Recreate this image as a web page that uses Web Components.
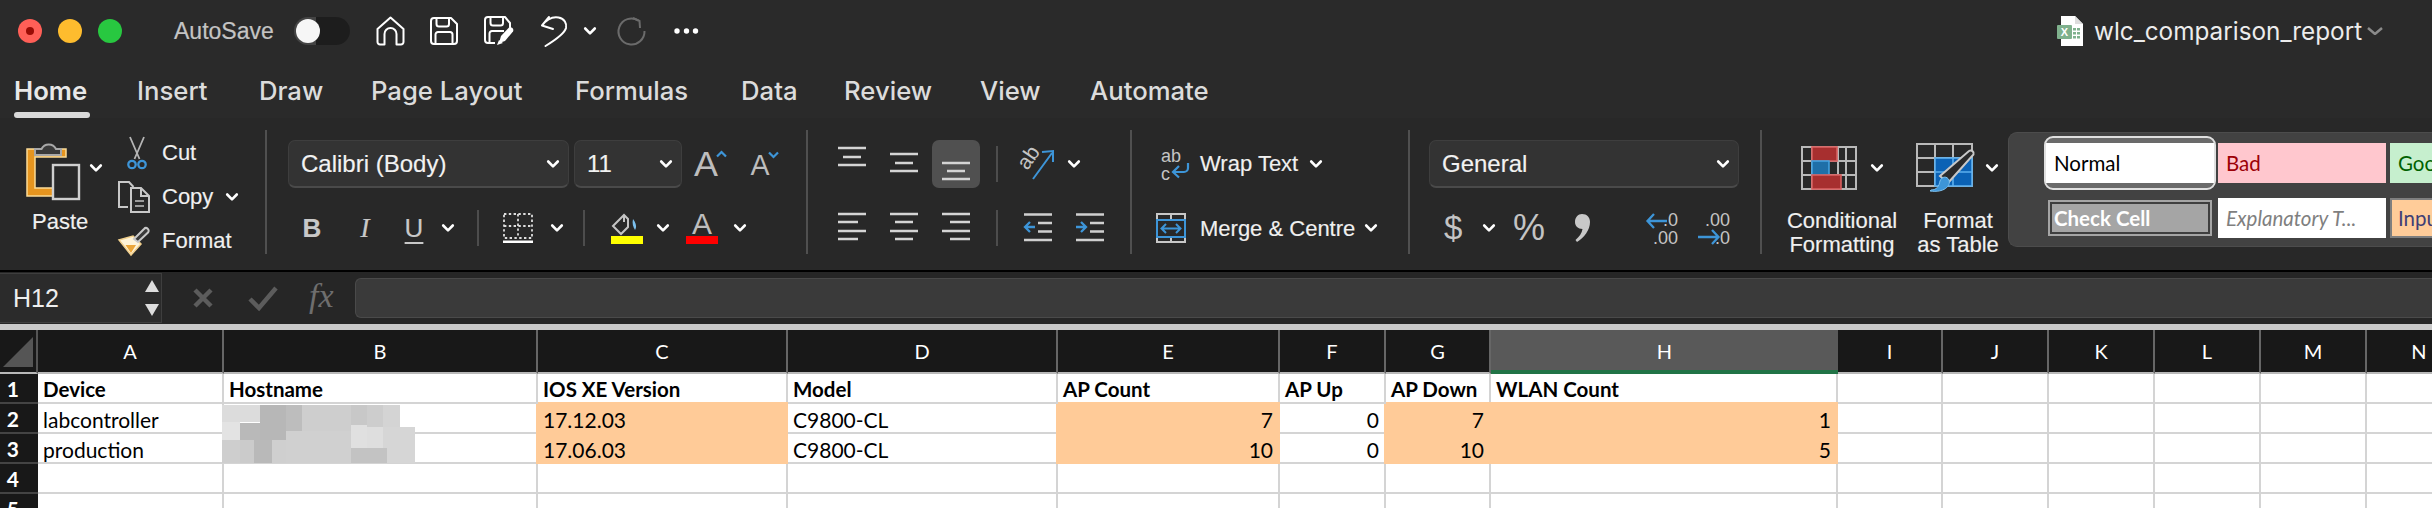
<!DOCTYPE html>
<html><head><meta charset="utf-8"><title>wlc_comparison_report</title>
<style>
html,body{margin:0;padding:0;background:#2a2a2a;width:2432px;height:508px;overflow:hidden;font-family:"Liberation Sans",sans-serif}
xl-app{display:block;width:2432px;height:508px;overflow:hidden}
</style></head><body>
<xl-app></xl-app>
<script>
const ICONS={
chev:[12,8,'<path d="M1.2 1.5 6 6.3 10.8 1.5" fill="none" stroke="#fff" stroke-width="2.6" stroke-linecap="round" stroke-linejoin="round"/>'],
home:[30,30,'<path d="M1.5 13 14.5 1.5 27.5 13V26a2.5 2.5 0 0 1-2.500 2.500H20.500V18a6 6 0 0 0-12 0V28.500H4a2.500 2.500 0 0 1-2.500-2.500Z" fill="none" stroke="#fff" stroke-width="2" stroke-linejoin="round"/>'],
save:[28,28,'<g fill="none" stroke="#fff" stroke-width="2" stroke-linejoin="round"><path d="M4 1H21L27 7V24a3 3 0 0 1-3 3H4a3 3 0 0 1-3-3V4a3 3 0 0 1 3-3Z"/><path d="M6.500 1V7a2.500 2.500 0 0 0 2.500 2.500H16.500A2.500 2.500 0 0 0 19 7V1"/><path d="M5.500 27V17.500A2.500 2.500 0 0 1 8 15H20a2.500 2.500 0 0 1 2.500 2.500V27"/></g>'],
saveas:[30,30,'<g fill="none" stroke="#fff" stroke-width="2" stroke-linejoin="round"><path d="M26 12V7L21 1H4a3 3 0 0 0-3 3V24a3 3 0 0 0 3 3H11"/><path d="M6.500 1V7a2.500 2.500 0 0 0 2.500 2.500H16.500A2.500 2.500 0 0 0 19 7V1"/><path d="M5.500 27V17.500A2.500 2.500 0 0 1 8 15H20"/></g><path d="M15 27 17 20 25 11.500a3 3 0 0 1 4 4L21 25Z" fill="#fff"/><path d="M13 29 15 24 19 27Z" fill="#fff"/>'],
undo:[28,32,'<path d="M9 2 2 10.500 13 14M2 10.500C7 4 13 1.500 18.500 2.500 24.500 3.500 27 8.500 26 13 25 17 21 21.500 5.500 31" fill="none" stroke="#fff" stroke-width="2" stroke-linejoin="round" stroke-linecap="round"/>'],
redo:[28,28,'<path d="M20.500 3.500A13 13 0 1 0 26.500 14" fill="none" stroke="#6b6b6b" stroke-width="2"/><path d="M15 1 21.500 4 22 11" fill="none" stroke="#6b6b6b" stroke-width="2"/>'],
dots:[24,6,'<g fill="#fff"><circle cx="3" cy="3" r="2.700"/><circle cx="12.500" cy="3" r="2.700"/><circle cx="21.500" cy="3" r="2.700"/></g>'],
xls:[26,30,'<path d="M4 0H18L26 8V30H4Z" fill="#fff"/><path d="M18 0 26 8H18Z" fill="#ddd"/><rect x="0" y="9" width="15" height="14" rx="1" fill="#7fb18d"/><text x="7.500" y="20" font-family="Liberation Sans" font-size="11" font-weight="700" fill="#fff" text-anchor="middle">X</text><g fill="#7fb18d"><rect x="16" y="12" width="3" height="2.500"/><rect x="20" y="12" width="3" height="2.500"/><rect x="16" y="16" width="3" height="2.500"/><rect x="20" y="16" width="3" height="2.500"/><rect x="16" y="20" width="3" height="2.500"/><rect x="20" y="20" width="3" height="2.500"/></g>'],
paste:[54,60,'<path d="M1 9H40V17H9V48H27V56H1Z" fill="#e6951f" stroke="#fbdc98" stroke-width="1.500"/><path d="M9 15V9H15.500A8 8 0 0 1 30 9H35V15Z" fill="#3a3a3a" stroke="#a8a8a8" stroke-width="2"/><rect x="27" y="25" width="26" height="34" fill="#282828" stroke="#cfcfcf" stroke-width="2.400"/>'],
cut:[20,32,'<path d="M3 0 12.500 22M17 0 7.500 22" stroke="#b5b5b5" stroke-width="1.800" fill="none"/><circle cx="5" cy="27.500" r="3.700" fill="none" stroke="#3d95d8" stroke-width="2.300"/><circle cx="15" cy="27.500" r="3.700" fill="none" stroke="#3d95d8" stroke-width="2.300"/>'],
copy:[32,32,'<g fill="none" stroke="#c8c8c8" stroke-width="2"><path d="M10 26H1V1H11L15.500 6"/><path d="M13 7H23L31 15V31H13Z"/><path d="M23 7V15H31"/></g><path d="M17 20H26M17 25H26" stroke="#9a9a9a" stroke-width="2.200"/>'],
brush:[32,30,'<path d="M15 10 23 18 13 29 1 14Z" fill="#fff4d8" stroke="#f1d08d" stroke-width="1.500"/><path d="M7.500 19 18 19 13 27Z" fill="#eba63a"/><path d="M16 13 26 3a2.500 2.500 0 0 1 4 3.500L20 16Z" fill="#3a3a3a" stroke="#c8c8c8" stroke-width="2"/>'],
aup:[32,28,'<text x="11" y="26" font-family="Liberation Sans" font-size="35" fill="#bdbdbd" text-anchor="middle" font-weight="400" textLength="24" lengthAdjust="spacingAndGlyphs">A</text><path d="M22 6.500 26.500 2 31 6.500" fill="none" stroke="#3d95d8" stroke-width="2.200"/>'],
adown:[28,26,'<text x="9" y="24" font-family="Liberation Sans" font-size="29" fill="#bdbdbd" text-anchor="middle" textLength="19" lengthAdjust="spacingAndGlyphs">A</text><path d="M18 1.500 22.500 6 27 1.500" fill="none" stroke="#3d95d8" stroke-width="2.200"/>'],
border:[30,30,'<rect x="1" y="1" width="28" height="24" fill="none" stroke="#ddd" stroke-width="1.800" stroke-dasharray="2.400 2.400"/><path d="M15 1V25M1 13H29" fill="none" stroke="#ddd" stroke-width="1.800" stroke-dasharray="2.400 2.400"/><rect y="27.500" width="30" height="2.500" fill="#fff"/>'],
fill:[32,32,'<path d="M2 14 13 3 17 7 17 15 10 22Z" fill="none" stroke="#c4c4c4" stroke-width="2"/><path d="M13 3V10" stroke="#c4c4c4" stroke-width="2"/><path d="M22 7C25 11 26 15 24 18 22 15 21 11 22 7Z" fill="#7cc0ee"/><rect y="24" width="32" height="8" fill="#ffff00"/>'],
fcolor:[32,32,'<text x="16" y="22" font-family="Liberation Sans" font-size="30" fill="#bdbdbd" text-anchor="middle" textLength="20" lengthAdjust="spacingAndGlyphs">A</text><rect y="24" width="32" height="8" fill="#ff0000"/>'],
orient:[33,31,'<text x="-1" y="16" transform="rotate(-55 8 13)" font-family="Liberation Sans" font-size="21" fill="#c4c4c4">ab</text><path d="M11 30 30 4M20 3 31 2 31 13" fill="none" stroke="#3d95d8" stroke-width="2"/>'],
outdent:[28,38,'<path d="M0 1.500H28M14 10H28M14 18.500H28M0 27H28" transform="translate(0,4)" stroke="#cfcfcf" stroke-width="2.500"/><path d="M11 14.500H1M6 9.500 1 14.500 6 19.500" transform="translate(0,3.500)" fill="none" stroke="#3d95d8" stroke-width="2.300"/>'],
indent:[28,38,'<path d="M0 1.500H28M14 10H28M14 18.500H28M0 27H28" transform="translate(0,4)" stroke="#cfcfcf" stroke-width="2.500"/><path d="M0 14.500H10M5 9.500 10 14.500 5 19.500" transform="translate(0,3.500)" fill="none" stroke="#3d95d8" stroke-width="2.300"/>'],
wrap:[28,28,'<text x="0" y="12" font-family="Liberation Sans" font-size="18" fill="#c4c4c4">ab</text><text x="0" y="30" font-family="Liberation Sans" font-size="18" fill="#c4c4c4">c</text><path d="M27 13V18a4 4 0 0 1-4 4H13M18 16 12 22 18 27.500" fill="none" stroke="#3d95d8" stroke-width="2.200"/>'],
merge:[30,30,'<path d="M15 0V7M15 24V30M0 1H30M0 29H30M1 0V30M29 0V30" fill="none" stroke="#c8c8c8" stroke-width="2"/><rect x="1" y="7" width="28" height="17" fill="#282828" stroke="#3d95d8" stroke-width="2"/><path d="M6 15.500H24M10 11 5.500 15.500 10 20M20 11 24.500 15.500 20 20" fill="none" stroke="#3d95d8" stroke-width="2"/>'],
comma:[15,28,'<path d="M7 0C12 0 15 3.500 15 8 15 16 9 24 2 28L0.500 26C4 23 7 19 7.500 15 3 15 0 12 0 8 0 3.500 3 0 7 0Z" fill="#c8c8c8"/>'],
incd:[32,36,'<text x="32" y="16" text-anchor="end" font-family="Liberation Sans" font-size="18" fill="#c4c4c4">.0</text><text x="32" y="34" text-anchor="end" font-family="Liberation Sans" font-size="18" fill="#c4c4c4">.00</text><path d="M21 11H2M8 4 1.500 11 8 18" fill="none" stroke="#3d95d8" stroke-width="2.300"/>'],
decd:[32,36,'<text x="32" y="16" text-anchor="end" font-family="Liberation Sans" font-size="18" fill="#c4c4c4">.00</text><text x="32" y="34" text-anchor="end" font-family="Liberation Sans" font-size="18" fill="#c4c4c4">.0</text><path d="M0 27H20M14 20 20.500 27 14 34" fill="none" stroke="#3d95d8" stroke-width="2.300"/>'],
cond:[56,44,'<path d="M1 1H55V43H1ZM1 15H55M1 29H55M11 1V43M27 1V43M37 1V43M45 1V43" fill="none" stroke="#b9b9b9" stroke-width="2"/><rect x="11" y="1" width="25" height="14" fill="#a72f2f" stroke="#d9605f" stroke-width="1.600"/><rect x="11" y="15" width="17" height="14" fill="#1f6fa8" stroke="#43a2e0" stroke-width="1.600"/><rect x="11" y="29" width="29" height="14" fill="#a72f2f" stroke="#d9605f" stroke-width="1.600"/>'],
table:[60,50,'<path d="M1 1H56V43H1ZM1 15H56M1 29H56M19 1V43M37 1V43" fill="none" stroke="#b9b9b9" stroke-width="2"/><rect x="19" y="15" width="37" height="28" fill="#0b62b5" stroke="#5cb0ee" stroke-width="1.600"/><path d="M19 29H56M37 15V43" stroke="#5cb0ee" stroke-width="1.600"/><path d="M24 33 53 8a3 3 0 0 1 4.500 3.500L32 40Z" fill="#2a2a2a" stroke="#c8c8c8" stroke-width="2"/><path d="M15 47C21 47 23 43 24 38 26 33 31 33 33 37 35 43 28 50 14 48Z" fill="#3d95d8" stroke="#7cc0ee" stroke-width="1"/>'],
fx:[30,30,'<text x="0" y="24" font-family="Liberation Serif" font-style="italic" font-size="34" fill="#6e6e6e">fx</text>'],
x:[20,18,'<path d="M2 1 18 17M18 1 2 17" stroke="#5c5c5c" stroke-width="4.500"/>'],
check:[30,24,'<path d="M2 13 11 22 28 2" fill="none" stroke="#5c5c5c" stroke-width="4.500"/>']
};
function lines(rows,w){return `<svg width="48" height="48" viewBox="0 0 48 48"><path d="${rows.map(r=>`M${r[1]} ${r[0]}H${r[2]}`).join('')}" stroke="#d4d4d4" stroke-width="2.500"/></svg>`}
const def=(name,html,extra)=>{customElements.define(name,class extends HTMLElement{
  constructor(){super();const s=this.attachShadow({mode:'open'});s.innerHTML=typeof html==='function'?html(this):html;}
  connectedCallback(){if(extra)extra(this)}
})};
customElements.define('xl-icon',class extends HTMLElement{
  connectedCallback(){
    if(this.shadowRoot)return;
    const [w,h,d]=ICONS[this.getAttribute('name')];
    const s=this.attachShadow({mode:'open'});
    s.innerHTML=`<style>:host{display:inline-flex;flex:none;width:${w}px;height:${h}px}svg{display:block;overflow:visible}</style><svg width="${w}" height="${h}" viewBox="0 0 ${w} ${h}">${d}</svg>`;
  }
});
def('xl-select',`<style>
:host{display:flex;align-items:center;box-sizing:border-box;height:48px;background:#333;border:1px solid #3e3e3e;border-bottom:2px solid #4a4a4a;border-radius:7px;padding:0 9px 0 12px;color:#f2f2f2;font:24px "Liberation Sans",sans-serif;flex:none}
.v{flex:1;white-space:nowrap}</style><span class="v"><slot></slot></span><xl-icon name="chev"></xl-icon>`);
def('xl-title',`<style>
:host{display:flex;align-items:center;height:62px;padding-left:18px;color:#c8c8c8;flex:none}
.l{width:24px;height:24px;border-radius:50%;margin-right:16px;display:flex;align-items:center;justify-content:center}
.a{width:120px;margin-left:36px;font:500 23px "Liberation Sans",sans-serif;color:#c4c4c4;-webkit-text-stroke:.2px #c4c4c4}
.t{width:56px;height:28px;border-radius:14px;background:linear-gradient(90deg,#444 0,#444 40%,#1d1d1d 40%);display:flex;align-items:center;padding-left:2px;box-sizing:border-box}
.k{width:24px;height:24px;border-radius:50%;background:#f6f6f6}
.f{font:24.300px Inter,"Liberation Sans",sans-serif;color:#ececec;margin-left:11px;width:265px;white-space:nowrap}
</style>
<span class="l" style="background:#ff5f57"><span style="width:8px;height:8px;border-radius:50%;background:#9a0b05"></span></span>
<span class="l" style="background:#febc2e"></span><span class="l" style="background:#28c840"></span>
<span class="a">AutoSave</span><span class="t"><span class="k"></span></span>
<xl-icon name="home" style="margin-left:26px"></xl-icon><xl-icon name="save" style="margin-left:24px"></xl-icon><xl-icon name="saveas" style="margin-left:26px"></xl-icon>
<xl-icon name="undo" style="margin-left:26px"></xl-icon><xl-icon name="chev" style="margin-left:16px"></xl-icon>
<xl-icon name="redo" style="margin-left:22px"></xl-icon><xl-icon name="dots" style="margin-left:28px"></xl-icon>
<xl-icon name="xls" style="margin-left:1359px"></xl-icon><span class="f">wlc_comparison_report</span>
<svg width="16" height="8" viewBox="0 0 16 8" style="margin-left:8px"><path d="M1 1 8 7 15 1" fill="none" stroke="#8a8a8a" stroke-width="2.500"/></svg>`);
def('xl-tabs',()=>{const t=[['Home',123],['Insert',122],['Draw',112],['Page Layout',204],['Formulas',166],['Data',103],['Review',136],['View',110],['Automate',140]];
return `<style>:host{display:flex;height:56px;padding-left:14px;flex:none;font:500 25.700px Inter,"Liberation Sans",sans-serif;color:#dcdcdc}
.tab{padding-top:14px;line-height:30px;flex:none;box-sizing:border-box;white-space:nowrap}
.on{font-weight:600;color:#e8e8e8}
.bar{width:76px;height:6px;border-radius:3px;background:#d9d9d9;margin-top:6px}</style>`+
t.map((x,i)=>`<div class="tab ${i?'':'on'}" style="width:${x[1]}px">${x[0]}${i?'':'<div class="bar"></div>'}</div>`).join('')});
def('xl-chip',`<style>:host{display:flex;align-items:center;box-sizing:border-box;height:40px;flex:none;overflow:hidden;white-space:nowrap;font:20.500px Lato,sans-serif}</style><slot></slot>`);
const L=(rows)=>lines(rows);
def('xl-ribbon',`<style>
:host{display:flex;height:152px;box-sizing:border-box;padding-top:12px;background:#282828;flex:none;color:#f0f0f0;font:22px "Liberation Sans",sans-serif;align-items:flex-start;-webkit-text-stroke:.15px}
.d{width:2px;height:124px;background:#505050;flex:none}
.g{flex:none;height:124px;padding-top:10px;box-sizing:border-box}
.r1{display:flex;align-items:center;height:48px}
.r2{display:flex;align-items:center;height:46px;margin-top:17px}
.sd{width:2px;height:36px;background:#4d4d4d;flex:none}
.btn{width:48px;height:48px;flex:none;border-radius:7px;display:block}
.btn svg{display:block}
.act{background:#505050}
.clip{display:flex;width:265px;padding:10px 0 0 26px}
.pc{width:92px;flex:none}
.pt{display:flex;align-items:center;height:60px}
.pl{margin:9px 0 0 6px;line-height:26px}
.cc{display:flex;flex-direction:column;margin-top:-9px}
.row{display:flex;align-items:center;height:44px;flex:none}
.ic{width:32px;display:flex;justify-content:center;margin-right:12px;flex:none}
.f{font:26px "Liberation Sans",sans-serif;color:#c8c8c8;width:20px;text-align:center;line-height:30px;flex:none}
.cell{padding-top:16px}
.col{display:flex;flex-direction:column;flex:none}
.ir{display:flex;align-items:center;height:44px}
.tx{margin-top:19px;line-height:24px;text-align:center;white-space:nowrap}
.gal{flex:1;height:115px;margin-top:2px;background:#424242;border:1px solid #4c4c4c;border-right:0;border-radius:9px 0 0 9px;box-sizing:border-box;padding:3px 0 0 35px;overflow:hidden;-webkit-text-stroke:0}
.gr{display:flex;align-items:center}
</style>
<div class="g clip">
  <div class="pc"><div class="pt"><xl-icon name="paste"></xl-icon><xl-icon name="chev" style="margin:-4px 0 0 10px"></xl-icon></div><div class="pl">Paste</div></div>
  <div class="cc">
    <div class="row"><span class="ic" style="width:26px;margin-left:6px"><xl-icon name="cut"></xl-icon></span>Cut</div>
    <div class="row"><span class="ic"><xl-icon name="copy"></xl-icon></span>Copy<xl-icon name="chev" style="margin-left:13px"></xl-icon></div>
    <div class="row"><span class="ic"><xl-icon name="brush"></xl-icon></span>Format</div>
  </div>
</div><i class="d"></i>
<div class="g" style="width:539px;padding-left:21px">
  <div class="r1"><xl-select style="width:281px">Calibri (Body)</xl-select><xl-select style="width:108px;margin-left:5px">11</xl-select>
    <xl-icon name="aup" style="margin-left:13px"></xl-icon><xl-icon name="adown" style="margin-left:24px"></xl-icon></div>
  <div class="r2" style="padding-left:14px">
    <span class="f" style="font-weight:700">B</span>
    <span class="f" style="font:italic 28px 'Liberation Serif',serif;margin-left:33px">I</span>
    <span class="f" style="margin-left:29px;text-decoration:underline;text-underline-offset:5px;text-decoration-thickness:2px">U</span>
    <xl-icon name="chev" style="margin-left:18px"></xl-icon>
    <i class="sd" style="margin-left:23px"></i>
    <xl-icon name="border" style="margin-left:24px"></xl-icon><xl-icon name="chev" style="margin-left:18px"></xl-icon>
    <i class="sd" style="margin-left:20px"></i>
    <xl-icon name="fill" style="margin-left:26px"></xl-icon><xl-icon name="chev" style="margin-left:14px"></xl-icon>
    <xl-icon name="fcolor" style="margin-left:17px"></xl-icon><xl-icon name="chev" style="margin-left:16px"></xl-icon>
  </div>
</div><i class="d"></i>
<div class="g" style="width:322px;padding-left:20px">
  <div class="r1">
    <span class="btn">${L([[8,10,38],[17,15,33],[25,10,38]])}</span>
    <span class="btn" style="margin-left:4px">${L([[14,10,38],[23,15,33],[31,10,38]])}</span>
    <span class="btn act" style="margin-left:4px">${L([[23,10,38],[31,15,33],[39,10,38]])}</span>
    <i class="sd" style="margin-left:16px"></i><xl-icon name="orient" style="margin-left:24px"></xl-icon><xl-icon name="chev" style="margin-left:13px"></xl-icon>
  </div>
  <div class="r2">
    <span class="btn">${L([[10,10,38],[18,10,30],[27,10,38],[35,10,30]])}</span>
    <span class="btn" style="margin-left:4px">${L([[10,10,38],[18,15,33],[27,10,38],[35,15,33]])}</span>
    <span class="btn" style="margin-left:4px">${L([[10,10,38],[18,18,38],[27,10,38],[35,18,38]])}</span>
    <i class="sd" style="margin-left:16px"></i><xl-icon name="outdent" style="margin-left:26px"></xl-icon><xl-icon name="indent" style="margin-left:24px"></xl-icon>
  </div>
</div><i class="d"></i>
<div class="g" style="width:276px">
  <div class="r1" style="padding-left:29px"><xl-icon name="wrap"></xl-icon><span style="margin-left:11px">Wrap Text</span><xl-icon name="chev" style="margin-left:12px"></xl-icon></div>
  <div class="r2" style="padding-left:24px"><xl-icon name="merge"></xl-icon><span style="margin:1px 0 0 14px;white-space:nowrap">Merge &amp; Centre</span><xl-icon name="chev" style="margin-left:10px"></xl-icon></div>
</div><i class="d"></i>
<div class="g" style="width:350px;padding-left:19px">
  <div class="r1"><xl-select style="width:310px">General</xl-select></div>
  <div class="r2" style="padding-left:15px">
    <span style="font:33px 'Liberation Sans',sans-serif;color:#c4c4c4;width:18px;text-align:center;flex:none;-webkit-text-stroke:0">$</span><xl-icon name="chev" style="margin-left:21px"></xl-icon>
    <span style="font:36px 'Liberation Sans',sans-serif;color:#c4c4c4;width:32px;margin-left:18px;flex:none;letter-spacing:-1px;white-space:nowrap;-webkit-text-stroke:0">%</span>
    <xl-icon name="comma" style="margin-left:30px"></xl-icon><xl-icon name="incd" style="margin-left:56px"></xl-icon><xl-icon name="decd" style="margin-left:20px"></xl-icon>
  </div>
</div><i class="d"></i>
<div class="g cell" style="width:246px;display:flex;padding-left:24px">
  <div class="col" style="width:112px"><div class="ir" style="padding-left:15px"><xl-icon name="cond"></xl-icon><xl-icon name="chev" style="margin-left:14px"></xl-icon></div><div class="tx">Conditional<br>Formatting</div></div>
  <div class="col" style="width:84px;margin-left:18px"><div class="ir"><xl-icon name="table"></xl-icon><xl-icon name="chev" style="margin-left:10px"></xl-icon></div><div class="tx">Format<br>as Table</div></div>
</div>
<div class="gal">
  <div class="gr" style="height:54px">
    <div style="box-sizing:border-box;width:172px;height:54px;border:2px solid #e0e0e0;border-radius:9px;background:#6a6a6a;display:flex;align-items:center;flex:none">
      <xl-chip style="width:100%;background:#fff;color:#000;padding-left:8px;height:40px">Normal</xl-chip></div>
    <xl-chip style="width:168px;margin-left:2px;background:#ffc7ce;color:#9c0006;padding-left:8px">Bad</xl-chip>
    <xl-chip style="width:60px;margin-left:4px;background:#c6efce;color:#006100;padding-left:8px">Good</xl-chip>
  </div>
  <div class="gr" style="margin-top:8px;height:40px">
    <xl-chip style="width:164px;height:36px;margin:0 6px 0 4px;background:#a5a5a5;color:#fff;font-weight:700;border:2px solid #a5a5a5;outline:2px solid #3f3f3f;outline-offset:-4px;padding-left:4px">Check Cell</xl-chip>
    <xl-chip style="width:168px;background:#fff;color:#7f7f7f;font-style:italic;padding-left:8px">Explanatory T...</xl-chip>
    <xl-chip style="width:60px;margin-left:4px;background:#ffcc99;color:#3f3f76;padding-left:6px;border:2px solid #7f7f7f">Input</xl-chip>
  </div>
</div>`);
def('xl-formula',`<style>
:host{display:flex;align-items:center;height:54px;background:#262626;border-top:2px solid #000;box-sizing:border-box;flex:none}
.n{box-sizing:border-box;width:162px;height:50px;background:#2b2b2b;border:1px solid #3e3e3e;border-left:0;display:flex;align-items:center;padding-left:13px;color:#eee;font:25px "Liberation Sans",sans-serif;flex:none}
.v{flex:1}
.a{display:flex;flex-direction:column;gap:12px;margin-right:2px}
.in{flex:1;height:40px;background:#3a3a3a;border:1px solid #4a4a4a;border-right:0;border-radius:6px 0 0 6px;box-sizing:border-box;margin-left:16px}
</style>
<div class="n"><span class="v">H12</span><span class="a"><svg width="14" height="12" viewBox="0 0 14 12"><path d="M7 0 14 12H0Z" fill="#ddd"/></svg><svg width="14" height="12" viewBox="0 0 14 12"><path d="M7 12 14 0H0Z" fill="#ddd"/></svg></span></div>
<xl-icon name="x" style="margin-left:31px"></xl-icon><xl-icon name="check" style="margin-left:35px"></xl-icon><xl-icon name="fx" style="margin-left:31px"></xl-icon><div class="in"></div>`);
def('xl-sheet',()=>{
 const cols=[['A',186],['B',314],['C',250],['D',270],['E',222],['F',106],['G',105],['H',347],['I',105],['J',106],['K',106],['L',106],['M',106],['N',106]];
 const rows=[
  [['Device','b'],['Hostname','b'],['IOS XE Version','b'],['Model','b'],['AP Count','b'],['AP Up','b'],['AP Down','b'],['WLAN Count','b']],
  [['labcontroller',''],['',''],['17.12.03','o'],['C9800-CL',''],['7','or'],['0','r'],['7','or'],['1','or']],
  [['production',''],['',''],['17.06.03','o'],['C9800-CL',''],['10','or'],['0','r'],['10','or'],['5','or']],
  [],[]
 ];
 let h='<div class="ch corner"><svg width="30" height="30" viewBox="0 0 30 30" style="display:block;margin:7px 0 0 3px"><path d="M0 30 30 0V30Z" fill="#555"/></svg></div>';
 cols.forEach(c=>{h+=`<div class="ch${c[0]==='H'?' sel':''}">${c[0]}</div>`});
 rows.forEach((r,i)=>{
  h+=`<div class="rh">${i+1}</div>`;
  cols.forEach((c,j)=>{const d=r[j]||['',''];const cl=d[1].split('').map(x=>' '+x).join('');
   let extra='';
   if(i===1&&j===1)extra='<svg class="blur" width="200" height="68" viewBox="0 0 600 204"><g shape-rendering="crispEdges"><rect x="6" y="14" width="114" height="52" fill="#dcdcdc"/><rect x="120" y="14" width="78" height="106" fill="#b7b7b7"/><rect x="198" y="14" width="48" height="79" fill="#bdbdbd"/><rect x="246" y="14" width="147" height="79" fill="#cecece"/><rect x="393" y="14" width="48" height="61" fill="#c8c8c8"/><rect x="441" y="14" width="48" height="67" fill="#cdcdcd"/><rect x="489" y="14" width="51" height="67" fill="#d4d4d4"/><rect x="6" y="66" width="54" height="54" fill="#e3e3e3"/><rect x="60" y="69" width="60" height="51" fill="#b9b9b9"/><rect x="198" y="93" width="195" height="96" fill="#d0d0d0"/><rect x="393" y="75" width="48" height="69" fill="#e0e0e0"/><rect x="441" y="81" width="48" height="63" fill="#dedede"/><rect x="489" y="81" width="96" height="108" fill="#d6d6d6"/><rect x="393" y="144" width="108" height="45" fill="#c3c3c3"/><rect x="6" y="120" width="54" height="69" fill="#cecece"/><rect x="60" y="120" width="42" height="69" fill="#cbcbcb"/><rect x="102" y="120" width="54" height="69" fill="#b9b9b9"/><rect x="156" y="120" width="42" height="69" fill="#cfcfcf"/></g></svg>';
   h+=`<div class="c${cl}"><span class="x">${d[0]}</span>${extra}</div>`});
 });
 return `<style>
:host{display:block;height:178px;overflow:hidden;background:#fff;border-top:6px solid #c9c9c9;box-sizing:content-box;flex:none}
.grid{display:grid;grid-template-columns:38px ${cols.map(c=>c[1]+'px').join(' ')};grid-template-rows:44px repeat(5,30px);width:2480px;font:21px Lato,"Liberation Sans",sans-serif;color:#000}
.ch{background:#181818;color:#fff;display:flex;align-items:center;justify-content:center;border-right:2px solid #666;border-bottom:2px solid #b9b9b9;box-sizing:border-box;font-size:20px;padding-bottom:0}
.corner{display:block;padding:0;border-right-color:#555}
.sel{background:#595959;border-bottom:4px solid #217346;border-right:0;padding-top:2px}
.rh{background:#181818;color:#fff;font-weight:700;font-size:21px;box-sizing:border-box;border-bottom:2px solid #444;display:flex;align-items:center;justify-content:flex-end;padding:1px 19px 0 0}
.c{box-sizing:border-box;border-right:2px solid #d4d4d4;border-bottom:2px solid #d4d4d4;display:flex;align-items:center;padding:2px 5px 0;white-space:nowrap;position:relative}
.b{font-weight:700;font-size:20.500px}
.r{justify-content:flex-end}
.o{background:#ffcb98;border-color:#ffcb98;box-shadow:0 -2px 0 #ffcb98,-2px 0 0 #ffcb98}
.blur{position:absolute;left:-4px;top:-4px;z-index:2}
</style><div class="grid">${h}</div>`;
});
def('xl-app',`<style>:host{display:flex;flex-direction:column;background:#2a2a2a}</style>
<xl-title></xl-title><xl-tabs></xl-tabs><xl-ribbon></xl-ribbon><xl-formula></xl-formula><xl-sheet></xl-sheet>`);
</script>
</body></html>
